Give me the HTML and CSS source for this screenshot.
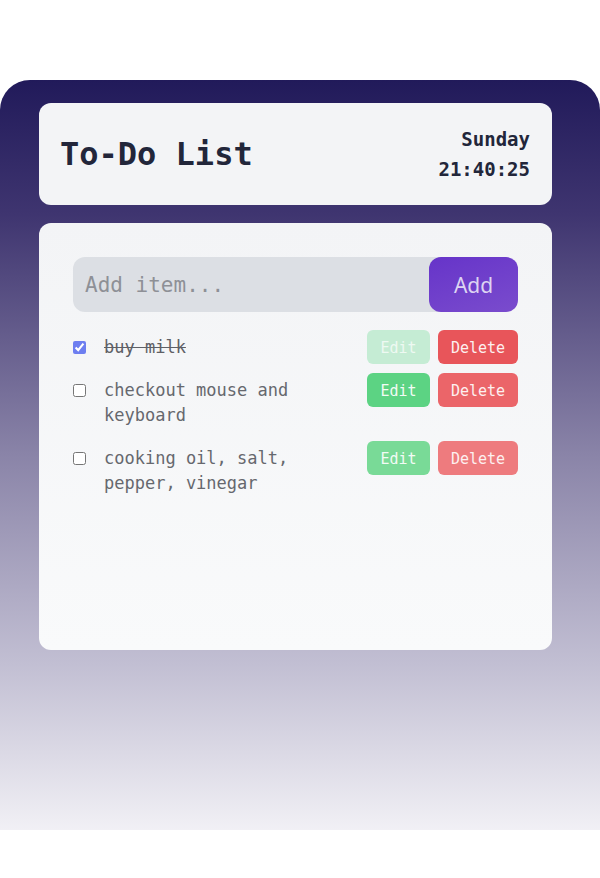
FILE: index.html
```html
<!DOCTYPE html>
<html lang="en">
<head>
<meta charset="utf-8">
<title>To-Do List</title>
<link rel="stylesheet" href="styles.css">
</head>
<body>
<div class="app">
  <header class="header">
    <h1 class="title">To-Do List</h1>
    <div class="clock">
      <div class="day">Sunday</div>
      <div class="time">21:40:25</div>
    </div>
  </header>
  <main class="card">
    <form class="add-form">
      <input class="add-input" type="text" placeholder="Add item...">
      <button class="add-btn" type="button">Add</button>
    </form>
    <ul class="list">
      <li class="item done">
        <input class="check" type="checkbox" checked>
        <span class="text">buy milk</span>
        <div class="actions">
          <button class="btn edit edit-off" type="button">Edit</button>
          <button class="btn del del-1" type="button">Delete</button>
        </div>
      </li>
      <li class="item">
        <input class="check" type="checkbox">
        <span class="text">checkout mouse and keyboard</span>
        <div class="actions">
          <button class="btn edit edit-2" type="button">Edit</button>
          <button class="btn del del-2" type="button">Delete</button>
        </div>
      </li>
      <li class="item">
        <input class="check" type="checkbox">
        <span class="text">cooking oil, salt, pepper, vinegar</span>
        <div class="actions">
          <button class="btn edit edit-3" type="button">Edit</button>
          <button class="btn del del-3" type="button">Delete</button>
        </div>
      </li>
    </ul>
  </main>
</div>
</body>
</html>
```

FILE: styles.css
```css
* { box-sizing: border-box; }

html, body {
  margin: 0;
  padding: 0;
  background: #ffffff;
}

body {
  font-family: "DejaVu Sans Mono", "Liberation Mono", monospace;
}

.app {
  margin-top: 80px;
  height: 750px;
  border-radius: 30px 30px 0 0;
  background: linear-gradient(180deg, #211a5a 0%, #3f3570 18%, #8a84a8 50%, #c2bfd3 78%, #f1f0f5 100%);
  padding: 23px 48px 0 39px;
  display: flex;
  flex-direction: column;
  gap: 18px;
}

.header {
  height: 102px;
  background: #f3f4f6;
  border-radius: 12px;
  display: flex;
  align-items: center;
  justify-content: space-between;
  padding: 0 22px 0 21px;
}

.title {
  margin: 0;
  font-size: 32px;
  font-weight: bold;
  color: #22263a;
  line-height: 40px;
}

.clock {
  text-align: right;
  font-size: 19px;
  font-weight: bold;
  color: #22263a;
  line-height: 30px;
}

.card {
  height: 427px;
  border-radius: 12px;
  background: linear-gradient(180deg, #f3f4f6 0%, #f9fafb 100%);
  padding: 34px 34px 0 34px;
}

.add-form {
  display: flex;
  height: 55px;
  margin: 0;
}

.add-input {
  flex: 1;
  min-width: 0;
  border: none;
  outline: none;
  background: #dcdfe4;
  border-radius: 12px 0 0 12px;
  padding: 0 12px;
  font-family: "DejaVu Sans Mono", "Liberation Mono", monospace;
  font-size: 21px;
  color: #333;
  margin-right: -12px;
}

.add-input::placeholder {
  color: #8e9096;
}

.add-btn {
  position: relative;
  width: 89px;
  border: none;
  border-radius: 12px;
  background: linear-gradient(160deg, #6634c9 0%, #7a4ccd 100%);
  color: #ddd4f2;
  font-family: "Noto Sans", "Open Sans", sans-serif;
  font-size: 21px;
  padding: 0;
}

.list {
  list-style: none;
  margin: 18px 0 0;
  padding: 0;
  display: flex;
  flex-direction: column;
  gap: 9px;
}

.item {
  display: flex;
  align-items: flex-start;
}

.check {
  width: 13px;
  height: 13px;
  margin: 11px 18px 0 0;
  flex: none;
  accent-color: #6d7ef0;
}

.text {
  flex: 1;
  font-size: 17px;
  line-height: 25px;
  padding: 5px 12px 4px 0;
  color: #66686e;
}

.done .text {
  text-decoration: line-through;
  color: #5e6066;
}

.actions {
  display: flex;
  gap: 8px;
  flex: none;
}

.btn {
  height: 34px;
  border: none;
  border-radius: 6px;
  font-family: "DejaVu Sans Mono", "Liberation Mono", monospace;
  font-size: 15px;
  color: #ffffff;
  padding: 1px 0 0;
}

.edit { width: 63px; }
.del { width: 80px; }

.edit-off { background: #c5ecd4; color: #eef9f2; }
.edit-2 { background: #5cd383; color: #f2fbf5; }
.edit-3 { background: #79da97; color: #f2fbf5; }

.del-1 { background: #e8555a; color: #fdf0f0; }
.del-2 { background: #eb6569; color: #fdf0f0; }
.del-3 { background: #ee7b7e; color: #fdf0f0; }
```
